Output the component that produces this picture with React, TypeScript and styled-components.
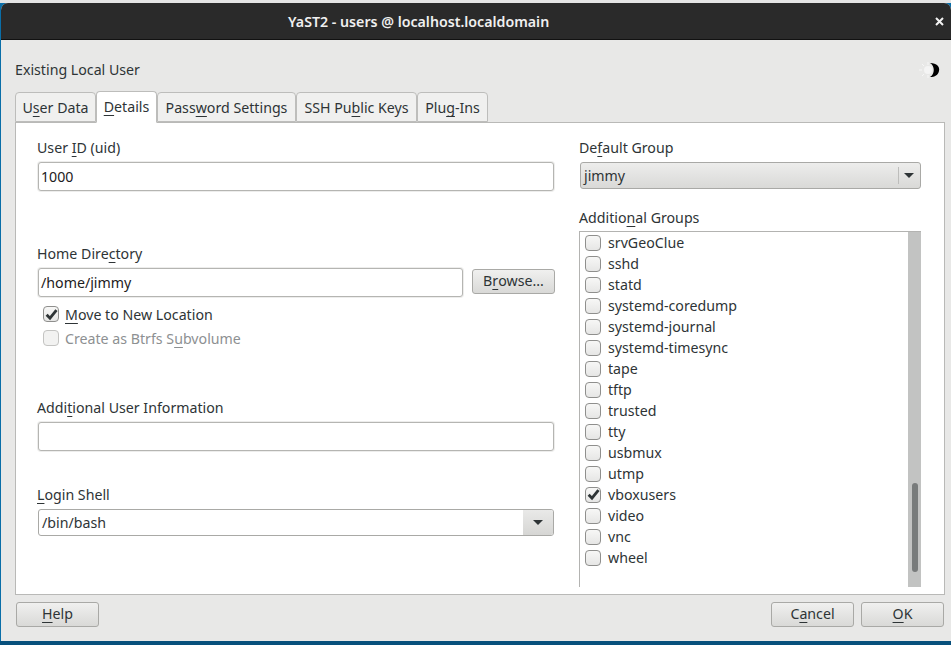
import React from "react";
import styled, { createGlobalStyle } from "styled-components";

const Global = createGlobalStyle`
  html, body { margin: 0; padding: 0; height: 645px; overflow: hidden; }
  body { font-family: "Noto Sans", "Open Sans", sans-serif; font-size: 14.2px; color: #2e3436; }
  u { text-decoration-thickness: 1px; text-underline-offset: 3px; text-decoration-skip-ink: none; }
`;

const Desktop = styled.div`
  width: 951px; height: 645px; box-sizing: border-box;
  padding: 3px 0 4px 1px;
  background: linear-gradient(#e4e4e4 0 3px, #0a6ea8 3px, #0a6ea8 641px, #08507c 641px);
`;
const Win = styled.div`
  height: 638px; display: flex; flex-direction: column;
  background: #e8e8e7; border-radius: 7px 7px 0 0; overflow: hidden;
`;
const TitleBar = styled.div`
  height: 37px; flex: none; box-sizing: border-box; border-bottom: 1px solid #111;
  background: #2a2a2a; color: #f0f0f0; font-weight: 600; font-size: 14.2px;
  display: flex; align-items: center; padding-left: 287px; padding-right: 7px; justify-content: space-between;
`;
const CloseIcon = styled.svg`width: 9px; height: 9px; stroke: #f2f2f2; stroke-width: 2; fill: none;`;
const Head = styled.div`
  height: 52px; flex: none; box-sizing: border-box; padding: 20px 10px 0 14px;
  display: flex; justify-content: space-between; align-items: flex-start;
  line-height: 20px;
`;
const Tabs = styled.div`display: flex; height: 30px; flex: none; padding-left: 14px; align-items: flex-end; position: relative; z-index: 1;`;
const Tab = styled.div<{ $on?: boolean; $w: number }>`
  box-sizing: border-box; width: ${p => p.$w}px; height: ${p => (p.$on ? 32 : 30)}px;
  margin-bottom: ${p => (p.$on ? -1 : 0)}px;
  display: flex; align-items: center; justify-content: center; line-height: 20px; padding-top: 2px;
  border: 1px solid #bdbdbb; border-radius: 4px 4px 0 0;
  background: ${p => (p.$on ? "#fff" : "#f0f0ef")};
  ${p => p.$on && "border-bottom-color:#fff; padding: 0;"}
`;
const Panel = styled.div`
  margin: 0 6px 0 14px; height: 473px; flex: none; box-sizing: border-box;
  border: 1px solid #b9b9b7; background: #fff; padding: 0 23px 0 21px;
  display: grid; grid-template-columns: 518px 342px; column-gap: 24px;
`;
const Col = styled.div`display: flex; flex-direction: column;`;
const Label = styled.div<{ $top: number }>`height: 20px; line-height: 22px; margin-top: ${p => p.$top}px;`;
const Field = styled.div<{ $w?: number }>`
  box-sizing: border-box; height: 29px; width: ${p => (p.$w ? `${p.$w}px` : "auto")};
  margin: 5px 1px 0 1px; border: 1px solid #b5b5b2; border-radius: 3px; background: #fff;
  box-shadow: 0 0 0 1px #ededec; padding: 0 2px; display: flex; align-items: center; color: #1d2021;
`;
const Row = styled.div`display: flex; align-items: flex-start;`;
const Btn = styled.div<{ $w: number; $ml?: number; $mt?: number }>`
  box-sizing: border-box; width: ${p => p.$w}px; height: 25px; margin: ${p => p.$mt ?? 0}px 0 0 ${p => p.$ml ?? 0}px;
  border: 1px solid #a9a9a6; border-radius: 3px; display: flex; align-items: center; justify-content: center;
  padding-bottom: 1px;
  background: linear-gradient(#f0f0ef, #d9d9d7); line-height: 20px;
`;
const Check = styled.span<{ $dis?: boolean }>`
  box-sizing: border-box; width: 16px; height: 16px; flex: none; border-radius: 4px;
  border: 1px solid ${p => (p.$dis ? "#c4c4c2" : "#8f8f8d")};
  background: ${p => (p.$dis ? "#f2f2f1" : "linear-gradient(#f7f7f6, #e6e6e5)")};
  display: flex; align-items: center; justify-content: center;
`;
const CheckRow = styled.div<{ $top: number; $dis?: boolean }>`
  display: flex; align-items: center; gap: 6px; height: 20px; margin: ${p => p.$top}px 0 0 6px;
  color: ${p => (p.$dis ? "#8d9092" : "inherit")};
`;
const Combo = styled.div<{ $top: number; $flat?: boolean }>`
  box-sizing: border-box; height: 27px; margin: ${p => p.$top}px ${p => (p.$flat ? 1 : 0)}px 0 1px;
  border: 1px solid #a9a9a6; border-radius: 3px; display: flex; align-items: stretch; overflow: hidden;
  background: ${p => (p.$flat ? "#fff" : "linear-gradient(#ededec, #d9d9d7)")};
`;
const ComboText = styled.div`flex: 1; display: flex; align-items: center; padding-left: 3px;`;
const ComboArrow = styled.div<{ $flat?: boolean }>`
  width: ${p => (p.$flat ? 30 : 22)}px; display: flex; align-items: center; justify-content: center; position: relative;
  background: ${p => (p.$flat ? "linear-gradient(#e9e9e8, #d6d6d4)" : "transparent")};
  ${p => !p.$flat && "&::before{content:'';position:absolute;left:0;top:4px;bottom:4px;width:1px;background:#bdbdbb;}"}
`;
const Arrow = styled.span`width: 0; height: 0; border: 5px solid transparent; border-top: 5px solid #2e3436; border-bottom: 0;`;
const GroupList = styled.div`
  margin-top: 4px; height: 356px; box-sizing: border-box; border-top: 1px solid #b3b3b1; border-left: 1px solid #b3b3b1;
  display: flex; overflow: hidden;
`;
const Items = styled.div`flex: 1; padding: 0 0 0 5px;`;
const Item = styled.div`height: 21px; display: flex; align-items: center; gap: 7px; span:last-child { margin-top: -1px; }`;
const Track = styled.div`width: 13px; flex: none; background: #c2c3c2; position: relative;`;
const Thumb = styled.div`
  position: absolute; left: 4px; top: 251px; width: 6px; height: 89px; border-radius: 3px; background: #787b7b;
`;
const Footer = styled.div`
  display: flex; justify-content: space-between; padding: 7px 7px 0 15px; align-items: flex-start;
`;
const FootRight = styled.div`display: flex;`;

const Tick = () => (
  <svg width="13" height="13" viewBox="0 0 12 12" fill="none" stroke="#2e3436" strokeWidth="2.6">
    <path d="M1.5 6.2 L4.6 9.4 L10.6 2" />
  </svg>
);
const Cb = ({ on, dis }: { on?: boolean; dis?: boolean }) => <Check $dis={dis}>{on && <Tick />}</Check>;

const groups = ["srvGeoClue","sshd","statd","systemd-coredump","systemd-journal","systemd-timesync","tape","tftp","trusted","tty","usbmux","utmp","vboxusers","video","vnc","wheel"];

export default function App() {
  return (
    <>
      <Global />
      <Desktop>
        <Win>
          <TitleBar>
            <span>YaST2 - users @ localhost.localdomain</span>
            <CloseIcon viewBox="0 0 9 9"><path d="M1 1 L8 8 M8 1 L1 8" /></CloseIcon>
          </TitleBar>
          <Head>
            <span>Existing Local User</span>
            <svg width="24" height="20" viewBox="0 0 24 20">
              <g stroke="#f6f6f6" strokeWidth="1"><path d="M2 10h3M11 2v3M11 15v3M5 4l2 2M5 16l2-2" /></g>
              <circle cx="11" cy="10" r="4" fill="#f4f4f4" />
              <path d="M13 3 C20 3 23 7 22 11 C21 15 18 17 13 17 C18 14 18 6 13 3Z" fill="#000" />
            </svg>
          </Head>
          <Tabs>
            <Tab $w={81}>U<u>s</u>er Data</Tab>
            <Tab $w={61} $on><u>D</u>etails</Tab>
            <Tab $w={139}>Pass<u>w</u>ord Settings</Tab>
            <Tab $w={121}>SSH Pu<u>b</u>lic Keys</Tab>
            <Tab $w={71}>Plu<u>g</u>-Ins</Tab>
          </Tabs>
          <Panel>
            <Col>
              <Label $top={14}>User <u>I</u>D (uid)</Label>
              <Field>1000</Field>
              <Label $top={52}>Home Dire<u>c</u>tory</Label>
              <Row>
                <Field $w={425}>/home/jimmy</Field>
                <Btn $w={83} $ml={8} $mt={6}>B<u>r</u>owse...</Btn>
              </Row>
              <CheckRow $top={7}><Cb on /><span><u>M</u>ove to New Location</span></CheckRow>
              <CheckRow $top={4} $dis><Cb dis /><span>Create as Btrfs S<u>u</u>bvolume</span></CheckRow>
              <Label $top={49}>Addi<u>t</u>ional User Information</Label>
              <Field>{"\u00a0"}</Field>
              <Label $top={33}><u>L</u>ogin Shell</Label>
              <Combo $top={5} $flat>
                <ComboText>/bin/bash</ComboText>
                <ComboArrow $flat><Arrow /></ComboArrow>
              </Combo>
            </Col>
            <Col>
              <Label $top={14}>De<u>f</u>ault Group</Label>
              <Combo $top={5}>
                <ComboText>jimmy</ComboText>
                <ComboArrow><Arrow /></ComboArrow>
              </Combo>
              <Label $top={18}>Additio<u>n</u>al Groups</Label>
              <GroupList>
                <Items>
                  {groups.map(g => (
                    <Item key={g}><Cb on={g === "vboxusers"} /><span>{g}</span></Item>
                  ))}
                </Items>
                <Track><Thumb /></Track>
              </GroupList>
            </Col>
          </Panel>
          <Footer>
            <Btn $w={83}><u>H</u>elp</Btn>
            <FootRight>
              <Btn $w={83}>C<u>a</u>ncel</Btn>
              <Btn $w={83} $ml={7}><u>O</u>K</Btn>
            </FootRight>
          </Footer>
        </Win>
      </Desktop>
    </>
  );
}
